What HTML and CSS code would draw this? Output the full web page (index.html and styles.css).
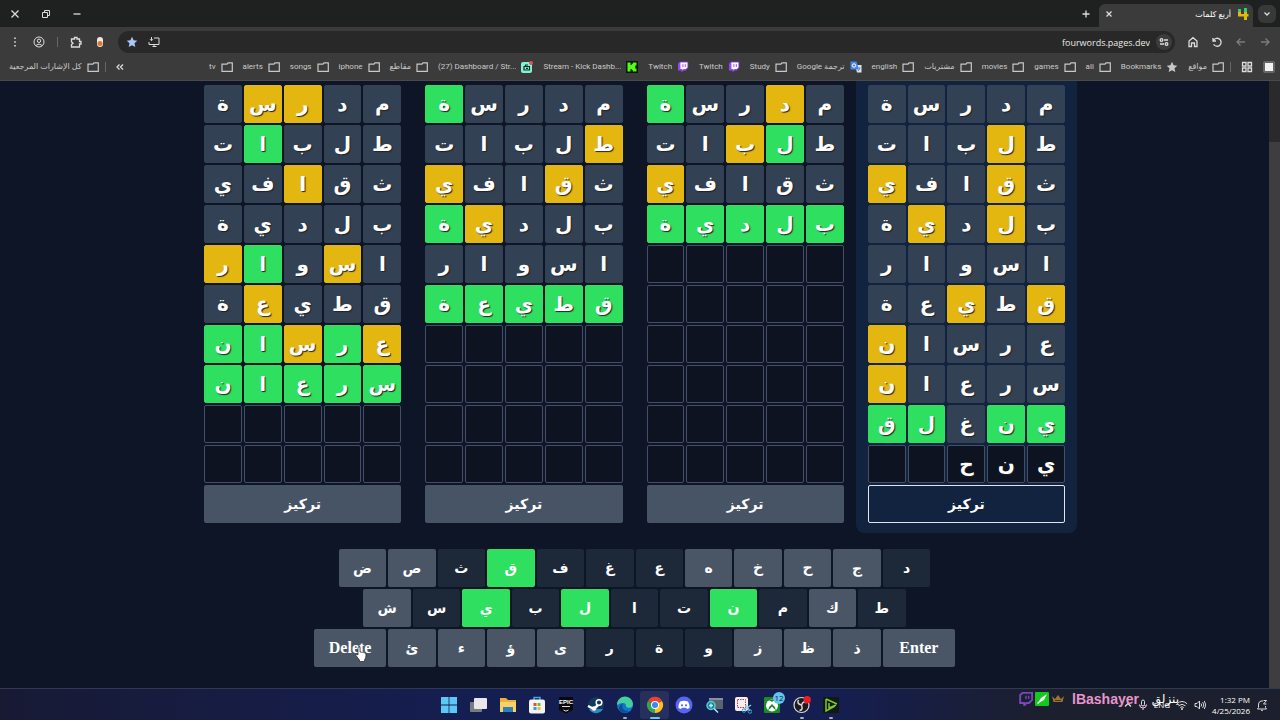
FILE: index.html
```html
<!DOCTYPE html>
<html lang="ar" dir="rtl">
<head>
  <meta charset="UTF-8">
  <meta name="viewport" content="width=device-width, initial-scale=1.0">
  <title>أربع كلمات</title>
  <link rel="stylesheet" href="styles.css">
</head>
<body>
  <svg class="sprite" aria-hidden="true">
    <symbol id="folder" viewBox="0 0 12 12"><path d="M1 10.300V3.200h5L7 1.800h4.300v8.500z" fill="none" stroke="#c8c8c8" stroke-width="1.200"/></symbol>
    <symbol id="twitch" viewBox="0 0 12 12"><path d="M1 2.600 3 .8h8.200v6L8.600 9.400H6.500l-2 2v-2H1z" fill="#9146ff"/><path d="M3.400 1.600h7v4.900L8.700 8.100h-2L5.400 9.300V8.100h-2z" fill="#fff"/><path d="M5.900 3.200v2.700M8.300 3.200v2.700" stroke="#9146ff"/></symbol>
  </svg>

  <header>
    <div class="tabs">
      <button class="tab-list" aria-label="Tabs"><svg width="8" height="8" viewBox="0 0 8 8"><path d="M1.500 2.500 4 5l2.500-2.500" class="line"/></svg></button>
      <div class="tab">
        <svg width="12" height="12" viewBox="0 0 12 12"><path d="M1 1h3v3H1zM7 0h3v4H7z" fill="#2fd06a"/><path d="M1 4h3v2h3V4h3v2h1.500v2.500H10V12H7V8.500H1z" fill="#e3b710"/></svg>
        <span>أربع كلمات</span>
        <button class="close" aria-label="Close tab"><svg width="8" height="8" viewBox="0 0 8 8"><path d="m1.500 1.500 5 5m0-5-5 5" class="line"/></svg></button>
      </div>
      <button class="icon" aria-label="New tab"><svg width="10" height="10" viewBox="0 0 10 10"><path d="M5 1.500v7M1.500 5h7" class="line"/></svg></button>
      <div class="window-buttons">
        <button aria-label="Minimize"><svg width="10" height="10" viewBox="0 0 10 10"><path d="M1.500 5h7" class="line"/></svg></button>
        <button aria-label="Restore"><svg width="10" height="10" viewBox="0 0 10 10"><path d="M1.500 3.500h5v5h-5zM3.500 3V1.500h5v5H7" class="line thin"/></svg></button>
        <button aria-label="Close"><svg width="10" height="10" viewBox="0 0 10 10"><path d="m1.500 1.500 7 7m0-7-7 7" class="line"/></svg></button>
      </div>
    </div>

    <div class="toolbar">
      <button class="dim" aria-label="Back"><svg width="12" height="12" viewBox="0 0 12 12"><path d="M2 6h8M6.500 2.500 10 6 6.500 9.500" class="line"/></svg></button>
      <button class="dim" aria-label="Forward"><svg width="12" height="12" viewBox="0 0 12 12"><path d="M10 6H2M5.500 2.500 2 6l3.500 3.500" class="line"/></svg></button>
      <button aria-label="Reload"><svg width="12" height="12" viewBox="0 0 12 12"><path d="M2 2v3h3M2.300 5A4 4 0 1 1 2.600 8.200" class="line"/></svg></button>
      <button aria-label="Home"><svg width="12" height="12" viewBox="0 0 12 12"><path d="M2 10.500V5L6 1.700 10 5v5.500H7.500V7h-3v3.500z" class="line"/></svg></button>
      <div class="address">
        <span class="site-info"><svg width="10" height="10" viewBox="0 0 10 10"><path d="M5 3h4M1 7h4" class="line"/><circle cx="2.500" cy="3" r="1.300" class="line"/><circle cx="7.500" cy="7" r="1.300" class="line"/></svg></span>
        <input type="text" dir="ltr" value="fourwords.pages.dev" aria-label="Address">
        <button aria-label="Install"><svg width="12" height="12" viewBox="0 0 12 12"><path d="M6 2h5v6.500H4M1 6v2.500h3M6 8.500v2M4.500 10.500h4M3.500 1v3.500M2 3.200l1.500 1.500L5 3.200" class="line thin"/></svg></button>
        <button aria-label="Bookmark"><svg width="12" height="12" viewBox="0 0 12 12"><path d="m6 .8 1.600 3.500 3.700.4-2.800 2.600.8 3.800L6 9.200l-3.300 1.900.8-3.800L.7 4.700l3.700-.4z" fill="#a8c7fa"/></svg></button>
      </div>
      <button aria-label="Extension"><svg width="12" height="12" viewBox="0 0 12 12"><rect x="3" y="1" width="6" height="10" rx="3" fill="#f3e6da"/><circle cx="6" cy="7.500" r="2.500" fill="#d9763a"/></svg></button>
      <button aria-label="Extensions"><svg width="12" height="12" viewBox="0 0 12 12"><path d="M1.500 3h3V1.500H7V3h2.500v2.500H11V8H9.500v3h-8V8.500L3 7.200 1.500 5.800z" class="line"/></svg></button>
      <i class="divider"></i>
      <button aria-label="Profile"><svg width="12" height="12" viewBox="0 0 12 12"><circle cx="6" cy="6" r="5" class="line thin"/><circle cx="6" cy="4.800" r="1.700" class="line thin"/><path d="M2.700 9.500q3.300-3 6.600 0" class="line thin"/></svg></button>
      <button aria-label="Menu"><svg width="12" height="12" viewBox="0 0 12 12"><path d="M5.200 1.500h1.600v1.600H5.200zM5.200 5.200h1.600v1.600H5.200zM5.200 8.900h1.600v1.600H5.200z" fill="#ddd"/></svg></button>
    </div>

    <nav class="bookmarks">
      <a href="#" aria-label="Side panel"><svg viewBox="0 0 12 12"><rect width="12" height="12" rx="2" fill="#666"/><rect x="2" y="2" width="8" height="8" fill="#f1f1f1"/></svg></a>
      <a href="#" aria-label="Apps"><svg viewBox="0 0 12 12"><path d="M1.500 1.500H5V5H1.500zM7 1.500h3.500V5H7zM1.500 7H5v3.500H1.500zM7 7h3.500v3.500H7z" class="line"/></svg></a>
      <i class="divider"></i>
      <a href="#"><svg><use href="#folder"/></svg><span>مواقع</span></a>
      <a href="#"><svg viewBox="0 0 12 12"><path d="m6 .8 1.600 3.500 3.700.4-2.800 2.600.8 3.800L6 9.200l-3.300 1.900.8-3.800L.7 4.700l3.700-.4z" fill="#c8c8c8"/></svg><span>Bookmarks</span></a>
      <a href="#"><svg><use href="#folder"/></svg><span>ali</span></a>
      <a href="#"><svg><use href="#folder"/></svg><span>games</span></a>
      <a href="#"><svg><use href="#folder"/></svg><span>movies</span></a>
      <a href="#"><svg><use href="#folder"/></svg><span>مشتريات</span></a>
      <a href="#"><svg><use href="#folder"/></svg><span>english</span></a>
      <a href="#"><svg viewBox="0 0 12 12"><path d="M5 4h6.500v7.500H7z" fill="#dfe3ea"/><path d="M.5.500h6l2.500 8H.5z" fill="#4a86e8"/><circle cx="4" cy="4.500" r="1.700" fill="none" stroke="#fff"/><path d="M8.500 7h2M9.500 7q0 2-1.500 3" stroke="#4a86e8" fill="none"/></svg><span>ترجمة Google</span></a>
      <a href="#"><svg><use href="#folder"/></svg><span>Study</span></a>
      <a href="#"><svg><use href="#twitch"/></svg><span>Twitch</span></a>
      <a href="#"><svg><use href="#twitch"/></svg><span>Twitch</span></a>
      <a href="#"><svg viewBox="0 0 12 12"><path d="M0 0h12v12H0z" fill="#0a1505"/><path d="M1.500 1.500h3v2.500h1.200V2.700h1.200V1.500h3.600v3H9.300v3h1.200v3H6.900V9.300H5.700V8H4.500v2.500h-3z" fill="#53fc18"/></svg><span dir="ltr">Stream - Kick Dashb...</span></a>
      <a href="#"><svg viewBox="0 0 12 12"><rect y="1" width="11" height="11" rx="2" fill="#80f5d2"/><path d="M3 5.500h5.500v3.500H3zM4.500 5.500V4H7M5 7.300h2" fill="none" stroke="#0a2a24" stroke-width="1.200"/><circle cx="10" cy="2" r="2" fill="#e0525e"/></svg><span dir="ltr">(27) Dashboard / Str...</span></a>
      <a href="#"><svg><use href="#folder"/></svg><span>مقاطع</span></a>
      <a href="#"><svg><use href="#folder"/></svg><span>iphone</span></a>
      <a href="#"><svg><use href="#folder"/></svg><span>songs</span></a>
      <a href="#"><svg><use href="#folder"/></svg><span>alerts</span></a>
      <a href="#"><svg><use href="#folder"/></svg><span>tv</span></a>
      <button class="more" aria-label="More bookmarks"><svg width="8" height="8" viewBox="0 0 8 8"><path d="M3.500 1.500 1 4l2.500 2.500M7 1.500 4.500 4 7 6.500" class="line"/></svg></button>
      <i class="divider"></i>
      <a href="#"><svg><use href="#folder"/></svg><span>كل الإشارات المرجعية</span></a>
    </nav>
  </header>

  <div class="page">
    <div class="scrollbar"><div class="thumb"></div></div>
    <main>
      <div id="boards" class="boards"></div>
      <div id="keyboard" class="keyboard"></div>
    </main>
  </div>

  <footer class="taskbar" dir="ltr">
    <div class="apps">
      <button aria-label="Start"><svg viewBox="0 0 18 18"><path d="M1 1h7.600v7.600H1zM9.400 1H17v7.600H9.400zM1 9.400h7.600V17H1zM9.400 9.400H17V17H9.400z" fill="#5cc8f5"/></svg></button>
      <button aria-label="Task view"><svg viewBox="0 0 18 18"><rect x="1" y="6" width="12" height="10" rx="1" fill="#777b82"/><rect x="5" y="2" width="13" height="11" rx="1" fill="#e8e8ec"/></svg></button>
      <button aria-label="Files"><svg viewBox="0 0 18 18"><path d="M1 2h6l2 2h8v12H1z" fill="#e9b23a"/><path d="M1 6h16v10H1z" fill="#fbd060"/><path d="M4 11h10v5H4z" fill="#2b7fc4"/></svg></button>
      <button aria-label="Store"><svg viewBox="0 0 18 18"><path d="M6 4V1.500h6V4" fill="none" stroke="#39a9e0" stroke-width="1.500"/><rect x="1" y="3.500" width="16" height="14" rx="2" fill="#f4f4f6"/><path d="M5.500 7h3v3h-3z" fill="#e8502f"/><path d="M9.500 7h3v3h-3z" fill="#7db82c"/><path d="M5.500 11h3v3h-3z" fill="#2ba1e0"/><path d="M9.500 11h3v3h-3z" fill="#f5b92e"/></svg></button>
      <button aria-label="Epic Games"><svg viewBox="0 0 18 18"><path d="M2 1h14v13l-7 3.500L2 14z" fill="#08080a"/><text x="9" y="8" class="epic">EPIC</text><path d="M5 10.500h8M6.500 14 9 15.200l2.500-1.200" stroke="#ddd" fill="none"/></svg></button>
      <button aria-label="Steam"><svg viewBox="0 0 18 18"><path d="M1 9a8 8 0 1 1 1 4z" fill="#14395f"/><path d="M2 13a8 8 0 0 0 14 0z" fill="#2b8cc4"/><path d="m1 10 6 3 5-5" stroke="#fff" stroke-width="2.500" fill="none"/><circle cx="12" cy="6.500" r="2.800" fill="#14395f" stroke="#fff" stroke-width="1.500"/><circle cx="7" cy="12.500" r="2.200" fill="#fff"/></svg></button>
      <button class="running" aria-label="Edge"><svg viewBox="0 0 18 18"><circle cx="9" cy="9" r="8" fill="#1476c8"/><path d="M1 9a8 8 0 0 1 16-1c0 5-7 4.500-7 2 0-2-1-3-3-3-3 0-5.500 2-6 2z" fill="#43cfa0"/><path d="M7 7.500c-2 3 0 8 6 7.500a8 8 0 0 1-7 1.500C2 15 2 9 7 7.500z" fill="#0b4f9b"/></svg></button>
      <button class="running active" aria-label="Chrome"><svg viewBox="0 0 18 18"><path d="M9 9 2 5a8 8 0 0 1 14 0z" fill="#e94235"/><path d="M9 9 16 5a8 8 0 0 1-7 12z" fill="#fbc116"/><path d="M9 9v8A8 8 0 0 1 2 5z" fill="#34a353"/><circle cx="9" cy="9" r="4" fill="#fff"/><circle cx="9" cy="9" r="3" fill="#4285f4"/></svg></button>
      <button aria-label="Discord"><svg viewBox="0 0 18 18"><circle cx="9" cy="9" r="8.500" fill="#5865f2"/><path d="M5 5.500q4-1.500 8 0 2 3.500 1.500 6.500l-2.500 1-1-1.200H7L6 13l-2.500-1Q3 9 5 5.500z" fill="#fff"/><circle cx="7" cy="9.300" r="1.100" fill="#5865f2"/><circle cx="11" cy="9.300" r="1.100" fill="#5865f2"/></svg></button>
      <button aria-label="Magnifier"><svg viewBox="0 0 18 18"><path d="M4 2h14v11H4z" fill="#59646c"/><path d="M4 2h14v2H4z" fill="#87919a"/><circle cx="6" cy="9.500" r="4" fill="#247c93" stroke="#4fd0e0" stroke-width="1.500"/><path d="m9 12.500 4 4M4 9.500h4M6 7.500v4" stroke="#aeeef5" stroke-width="1.500"/></svg></button>
      <button aria-label="Snipping tool"><svg viewBox="0 0 18 18"><rect x="1" y="1" width="13" height="14" rx="2" fill="#f2f2f4"/><rect x="3.500" y="3.500" width="8" height="8" fill="none" stroke="#d0343c" stroke-dasharray="1.500 1"/><path d="m10 14 7-5M12 9l4 6" stroke="#8fd0f0" stroke-width="1.300"/><circle cx="10" cy="14.500" r="1.800" fill="none" stroke="#3c9ed8"/><circle cx="16" cy="15.500" r="1.800" fill="none" stroke="#3c9ed8"/></svg></button>
      <button class="xbox" aria-label="Xbox"><svg viewBox="0 0 18 18"><rect x="1" y="1" width="16" height="16" rx="1" fill="#1c8a26"/><circle cx="9" cy="9.500" r="6" fill="#fff"/><path d="M5 14.500Q6 10 9 8q3 2 4 6.500Q10 12 9 10.500 8 12 5 14.500zM5.500 4.500q3 0 3.500 1.500.5-1.500 3.500-1.500Q9 3 5.500 4.500z" fill="#1c8a26"/></svg><b>12</b></button>
      <button class="running" aria-label="OBS"><svg viewBox="0 0 18 18"><circle cx="8.500" cy="9" r="7.500" fill="#1b1b20" stroke="#d8d8dc" stroke-width="1.200"/><path d="M8.500 9q-5-1-3-5M8.500 9q2-5 5-2M8.500 9q2 5-2 5.500" stroke="#d8d8dc" stroke-width="1.500" fill="none"/><circle cx="14.200" cy="3.800" r="3.700" fill="#ec1c24"/></svg></button>
      <button class="running" aria-label="Player"><svg viewBox="0 0 18 18"><path d="M1 1h16v16H1z" fill="#101a12"/><path d="m4 3 11 5M4 3v12l9-5M7 7v5l7-3" stroke="#7cc832" stroke-width="1.500" fill="none"/></svg></button>
    </div>
    <div class="tray">
      <svg width="8" height="8" viewBox="0 0 8 8"><path d="M1 5.500 4 2.500l3 3" class="line"/></svg>
      <svg width="10" height="12" viewBox="0 0 10 12"><rect x="3.500" y="1" width="3" height="6" rx="1.500" class="line thin"/><path d="M1.500 5.500q0 3.500 3.500 3.500t3.500-3.500M5 9v2" class="line thin"/></svg>
      <span>ENG</span>
      <svg width="12" height="12" viewBox="0 0 12 12"><path d="M.8 4.800q5.200-4.600 10.400 0M2.500 6.800q3.500-3 7 0M4.200 8.500q1.800-1.500 3.600 0" class="line thin"/><circle cx="6" cy="10" r="1" fill="#ddd"/></svg>
      <svg width="12" height="12" viewBox="0 0 12 12"><path d="M1 4.500h2L5.500 2v8L3 7.500H1zM7 4.500q1.300 1.500 0 3M8.700 3.200q2.300 2.800 0 5.600M10.300 2q3 4 0 8" class="line thin"/></svg>
      <time>1:32 PM<br>4/25/2026</time>
      <svg width="12" height="12" viewBox="0 0 12 12"><path d="M7 2Q2.500 1.500 2.500 6v2.500L1.500 10h9l-1-1.500V7M5 11.300h2M7.500 1.500h3l-3 3.500h3" class="line thin"/></svg>
    </div>
    <!-- stream overlay, floats over the tray -->
    <div class="stream-tag">
      <svg width="14" height="14" viewBox="0 0 12 12"><path d="M1 2.600 3 .8h8.200v6L8.600 9.400H6.500l-2 2v-2H1z" fill="none" stroke="#7b46b8" stroke-width="1.600"/><path d="M6 3.200v2.700M8.300 3.200v2.700" stroke="#7b46b8" stroke-width="1.200"/></svg>
      <svg width="14" height="14" viewBox="0 0 14 14"><rect width="14" height="14" rx="1" fill="#14c81e"/><path d="M12 2 6 6 3.500 10 2 11l1 1 1.500-1.500L9 8z" fill="#fff"/></svg>
      <svg width="14" height="14" viewBox="0 0 14 14"><path d="m1 4 3 3 3-4 3 4 3-3-1.500 6h-9z" fill="#9b7434"/><path d="M4 8.500h6" stroke="#4c3718"/></svg>
      <b>lBashayer_</b>
      <em dir="rtl">ينزلق</em>
    </div>
  </footer>

  <svg class="cursor" width="12" height="16" viewBox="0 0 12 16"><path d="M3 9V2q0-1.300 1-1.300T5 2v4q3 .2 5 1 1 .5 1 2 0 3-1.500 5v1.500h-5V14L1 9.500q-.5-1.500.8-1.200z" fill="#fff" stroke="#222" stroke-width=".7"/></svg>

  <script>
    const ROWS = 10;
    const COLS = 5;
    const guesses = ['مدرسة', 'طلبات', 'ثقافي', 'بلدية', 'اسوار', 'قطيعة', 'عرسان', 'سرعان', 'ينغلق'];
    const current = 'ينح';

    // g = right place, y = wrong place, - = not in the word
    const boards = [
      { focused: true, marks: ['-----', '-y---', '-y--y', '-y-y-', '-----', 'y-y--', '----y', '----y', 'gg-gg'] },
      { marks: ['-y--g', '-gy--', '----y', 'ggggg'] },
      { marks: ['----g', 'y----', '-y--y', '---yg', '-----', 'ggggg'] },
      { marks: ['--yy-', '---g-', '--y--', '-----', '-y-gy', '---y-', 'ygygg', 'ggggg'] }
    ];
    const keyRows = [
      ['د', 'ج', 'ح', 'خ', 'ه', 'ع', 'غ', 'ف', 'ق', 'ث', 'ص', 'ض'],
      ['ط', 'ك', 'م', 'ن', 'ت', 'ا', 'ل', 'ب', 'ي', 'س', 'ش'],
      ['Enter', 'ذ', 'ظ', 'ز', 'و', 'ة', 'ر', 'ى', 'ؤ', 'ء', 'ئ', 'Delete']
    ];
    const classes = { g: 'correct', y: 'present', '-': 'absent' };

    function addBoard({ focused, marks }) {
      const board = document.createElement('section');
      board.className = focused ? 'board focused' : 'board';
      let tiles = '';
      for (let r = 0; r < ROWS; r++) {
        for (let c = 0; c < COLS; c++) {
          if (marks[r]) {
            tiles += `<div class="tile ${classes[marks[r][c]]}">${guesses[r][c]}</div>`;
          } else {
            const letter = focused && r === marks.length ? current[c] || '' : '';
            tiles += `<div class="tile">${letter}</div>`;
          }
        }
      }
      board.innerHTML = `<div class="tiles">${tiles}</div><button class="focus">تركيز</button>`;
      document.getElementById('boards').appendChild(board);
    }

    function addKeyRow(keys) {
      const row = document.createElement('div');
      row.className = 'key-row';
      keys.forEach(key => {
        const button = document.createElement('button');
        button.textContent = key;
        button.className = 'key';
        if (key.length > 1) button.classList.add('wide');
        else if ('قيلن'.includes(key)) button.classList.add('correct');
        else if (guesses.join('').includes(key)) button.classList.add('used');
        row.appendChild(button);
      });
      document.getElementById('keyboard').appendChild(row);
    }

    boards.forEach(addBoard);
    keyRows.forEach(addKeyRow);
  </script>
</body>
</html>
```
FILE: styles.css
```css
* {
  box-sizing: border-box;
}
body {
  margin: 0;
  min-height: 100vh;
  display: flex;
  flex-direction: column;
  background-color: #0e1526;
  color: #fff;
  font-family: "Open Sans", "DejaVu Sans", sans-serif;
  font-size: 9px;
  overflow: hidden;
}
button {
  border: none;
  background: none;
  padding: 0;
  margin: 0;
  color: inherit;
  font: inherit;
  cursor: pointer;
}
svg {
  display: block;
  flex: none;
}
.sprite {
  position: absolute;
  width: 0;
  height: 0;
}
.line {
  fill: none;
  stroke: #dcdcdc;
  stroke-width: 1.3;
}
.thin {
  stroke-width: 1;
}

/* browser */
header {
  background-color: #3b3b3b;
  border-bottom: 1px solid #4a4a4a;
}
.tabs {
  display: flex;
  align-items: center;
  height: 27px;
  padding: 0 4px 0 10px;
  background-color: #1f2020;
}
.tab-list {
  display: grid;
  place-items: center;
  width: 18px;
  height: 18px;
  border-radius: 6px;
  background-color: #383838;
}
.tab {
  display: flex;
  align-items: center;
  align-self: flex-end;
  gap: 6px;
  width: 154px;
  height: 23px;
  margin: 0 5px 0 8px;
  padding: 0 4px 4px 6px;
  border-radius: 6px 6px 0 0;
  background-color: #3b3b3b;
  font-size: 8px;
}
.close {
  margin-right: auto;
}
.window-buttons {
  display: flex;
  gap: 21px;
  margin-right: auto;
}
.toolbar {
  display: flex;
  align-items: center;
  gap: 12px;
  height: 30px;
  padding: 0 9px;
}
.dim {
  opacity: 0.4;
}
.address {
  flex: 1;
  display: flex;
  align-items: center;
  gap: 10px;
  height: 22px;
  padding: 0 3px 0 8px;
  border-radius: 11px;
  background-color: #282828;
}
.site-info {
  display: grid;
  place-items: center;
  width: 16px;
  height: 16px;
  border-radius: 8px;
  background-color: #3c3c3c;
}
.address input {
  flex: 1;
  min-width: 0;
  margin-right: -4px;
  padding: 0;
  border: none;
  outline: none;
  background: none;
  color: #e8e8e8;
  font: 9px "Open Sans", sans-serif;
  text-align: right;
}
.divider {
  width: 1px;
  height: 10px;
  background-color: #666;
}
.bookmarks {
  display: flex;
  align-items: center;
  gap: 10px;
  height: 23px;
  padding: 0 5px 4px 9px;
  font-family: Roboto, "DejaVu Sans", sans-serif;
  font-size: 8px;
  white-space: nowrap;
}
.bookmarks a {
  display: flex;
  align-items: center;
  gap: 5px;
  color: #cacaca;
  text-decoration: none;
}
.bookmarks a svg {
  width: 12px;
  height: 12px;
}
.bookmarks .divider {
  margin-left: -4px;
}
.more {
  margin-right: auto;
}

/* game */
.page {
  flex: 1;
  display: flex;
}
.scrollbar {
  width: 11px;
  padding-top: 61px;
  background-color: #2a2a2c;
}
.thumb {
  height: 100%;
  background-color: #3e3e40;
}
main {
  flex: 1;
  padding-bottom: 21px;
  font-family: "Liberation Serif", "DejaVu Sans", serif;
  font-weight: bold;
}
.boards {
  display: grid;
  grid-template-columns: repeat(4, 1fr);
  max-width: 885px;
  margin: 0 auto;
}
.board {
  padding: 4px 12px 10px;
  border-radius: 0 0 8px 8px;
}
.board.focused {
  background-color: #11233f;
}
.tiles {
  display: grid;
  grid-template-columns: repeat(5, 1fr);
  gap: 2px;
  margin-bottom: 2px;
}
.tile {
  display: grid;
  place-items: center;
  height: 38px;
  border: 1px solid #444e68;
  border-radius: 2px;
  background-color: #0e1322;
  font-size: 20px;
  line-height: 24px;
  text-shadow: 1px 1px 1px #222;
}
.tile.absent {
  border-color: #334155;
  background-color: #334155;
}
.tile.present {
  border-color: #e3b710;
  background-color: #e3b710;
}
.tile.correct, .key.correct {
  border-color: #2fdf60;
  background-color: #2fdf60;
}
.focus {
  display: block;
  width: 100%;
  height: 38px;
  border-radius: 2px;
  background-color: #475466;
  font-size: 14px;
}
.focused .focus {
  border: 1px solid #e2e6ec;
  background: none;
}
.keyboard {
  display: grid;
  gap: 2px;
  max-width: 641px;
  margin: 16px auto 0;
}
.key-row {
  display: grid;
  grid-template-columns: repeat(26, 1fr);
  gap: 2px;
}
.key {
  grid-column: span 2;
  height: 38px;
  border-radius: 2px;
  background-color: #4a5666;
  font-size: 14px;
}
.key-row:nth-child(1) .key:first-child {
  grid-column: 2 / span 2;
}
.key-row:nth-child(2) .key:first-child {
  grid-column: 3 / span 2;
}
.key.wide {
  grid-column: span 3;
  font-size: 16px;
}
.key.used {
  background-color: #1d2938;
}

/* taskbar */
.taskbar {
  position: relative;
  display: grid;
  grid-template-columns: 1fr auto 1fr;
  align-items: center;
  height: 32px;
  border-top: 1px solid #2f3950;
  background: linear-gradient(90deg, #181a34, #151e50 35%, #151e50 65%, #1c1f2d 82%);
}
.apps {
  grid-column: 2;
  display: flex;
  width: 412px;
}
.apps button {
  position: relative;
  flex: 1;
  display: grid;
  place-items: center;
  height: 28px;
  border-radius: 3px;
}
.apps svg {
  width: 18px;
  height: 18px;
}
.epic {
  fill: #fff;
  font: bold 6px "Liberation Sans", sans-serif;
  text-anchor: middle;
}
.apps .active {
  background-color: #27305c;
}
.running::after {
  content: "";
  position: absolute;
  bottom: 0;
  width: 4px;
  height: 2px;
  border-radius: 1px;
  background-color: #a9adbd;
}
.active::after {
  width: 10px;
  background-color: #67c6f2;
}
.xbox b {
  position: absolute;
  top: 1px;
  right: 2px;
  width: 12px;
  border-radius: 6px;
  background-color: #62c4f0;
  color: #10233c;
  font-size: 8px;
  font-weight: normal;
  line-height: 12px;
}
.tray {
  display: flex;
  align-items: center;
  justify-content: flex-end;
  gap: 6px;
  padding-right: 12px;
  font-size: 8px;
  line-height: 11px;
}
.tray time {
  text-align: right;
}
.stream-tag {
  position: absolute;
  top: 0;
  right: 101px;
  display: flex;
  align-items: center;
  gap: 2px;
  height: 20px;
  font-family: "Liberation Sans", "DejaVu Sans", sans-serif;
}
.stream-tag b {
  margin: 0 3px 0 5px;
  color: #e796cd;
  font-size: 14px;
}
.stream-tag em {
  font-size: 12px;
  font-style: normal;
}
.cursor {
  position: absolute;
  top: 646px;
  left: 355px;
}
```
